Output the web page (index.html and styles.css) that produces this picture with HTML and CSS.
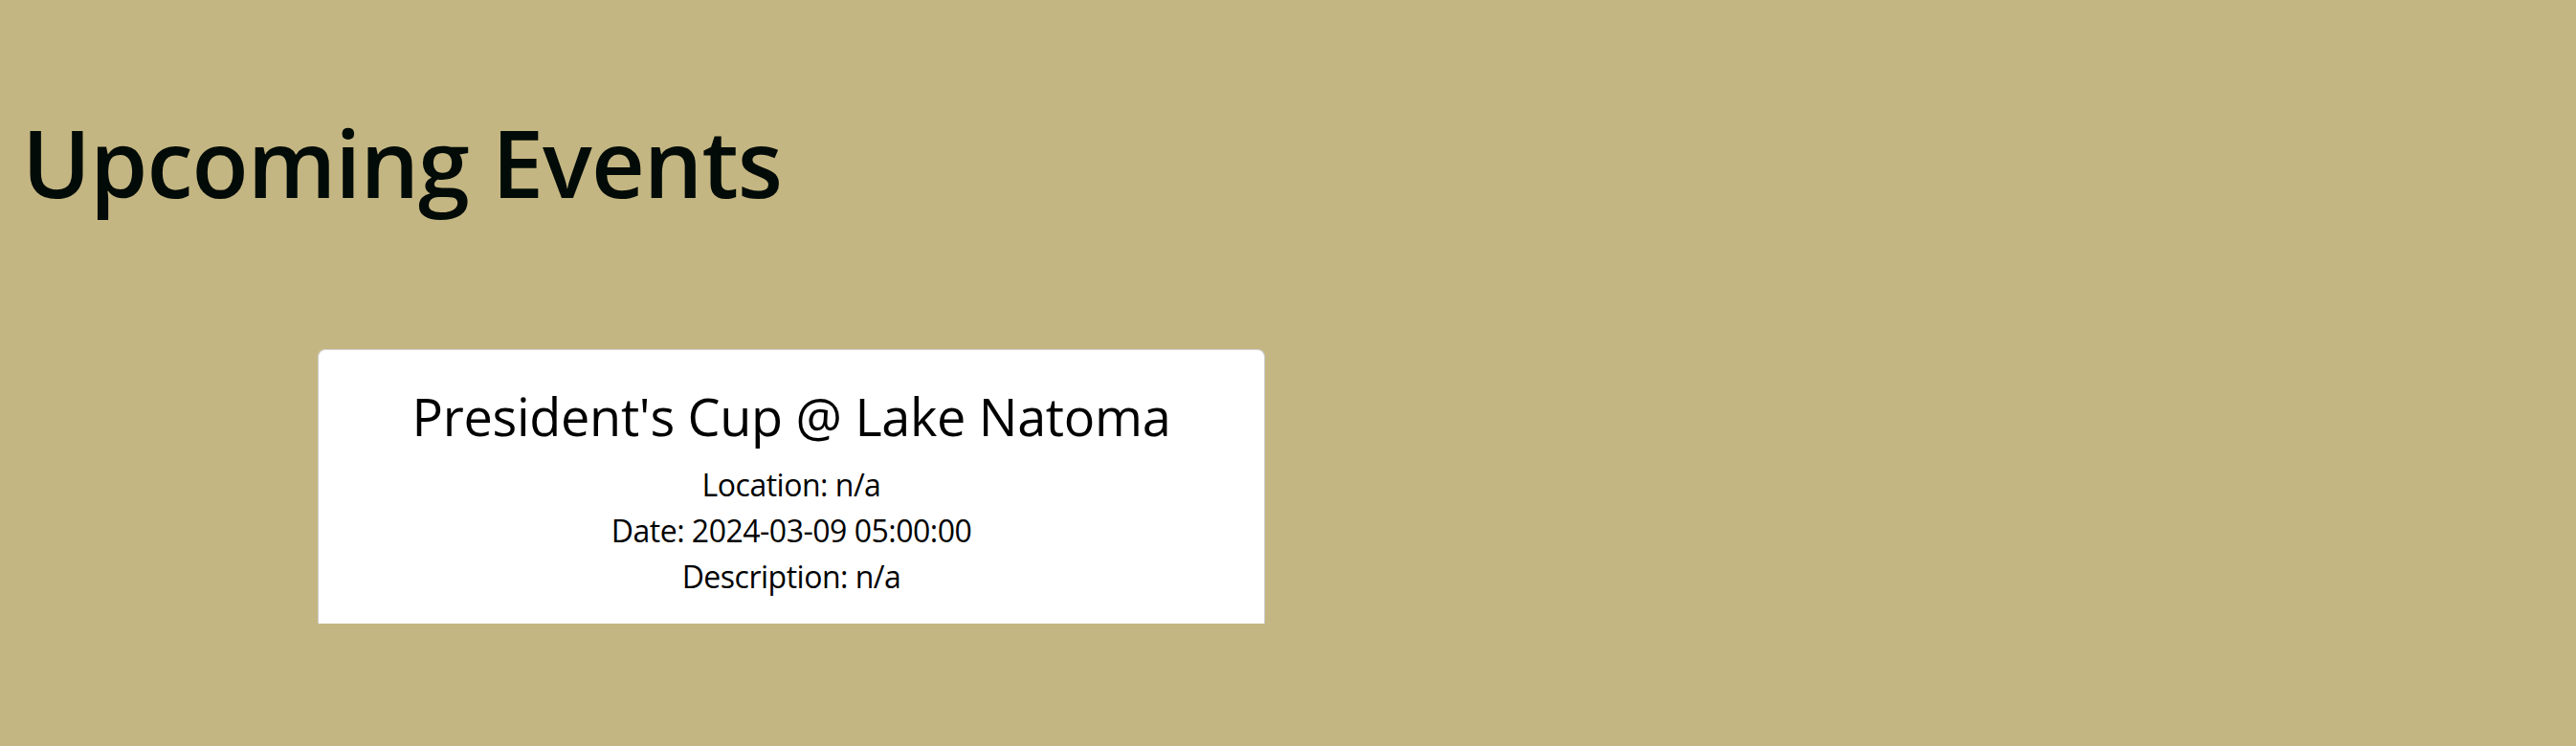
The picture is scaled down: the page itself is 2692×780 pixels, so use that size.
FILE: index.html
```html
<!DOCTYPE html>
<html lang="en">
<head>
<meta charset="utf-8">
<title>Upcoming Events</title>
<link rel="stylesheet" href="styles.css">
</head>
<body>
  <main class="page">
    <h1 class="page-title">Upcoming Events</h1>
    <section class="events">
      <article class="event-card">
        <h2 class="event-title">President's Cup @ Lake Natoma</h2>
        <p class="event-line">Location: n/a</p>
        <p class="event-line">Date: 2024-03-09 05:00:00</p>
        <p class="event-line">Description: n/a</p>
      </article>
    </section>
  </main>
</body>
</html>
```

FILE: styles.css
```css
html, body {
  margin: 0;
  padding: 0;
  background: #c4b682;
}

body {
  font-family: "Open Sans", "Noto Sans", "Liberation Sans", sans-serif;
  color: #000;
  height: 780px;
  overflow: hidden;
}

.page {
  display: flex;
  flex-direction: column;
}

.page-title {
  margin: 111px 0 0 0;
  padding-left: 23px;
  font-size: 97px;
  line-height: 116px;
  font-weight: 600;
  letter-spacing: -1px;
  color: #020b07;
}

.events {
  display: flex;
  padding-left: 332px;
  margin-top: 138px;
}

.event-card {
  box-sizing: border-box;
  width: 990px;
  height: 287px;
  background: #fff;
  border: 1px solid #cfcfcf;
  border-bottom: none;
  border-radius: 8px 8px 0 0;
  padding: 37px 20px 0;
  text-align: center;
  overflow: hidden;
}

.event-title {
  margin: 0 0 15px;
  font-size: 54px;
  line-height: 65px;
  font-weight: 400;
  letter-spacing: -0.3px;
}

.event-line {
  margin: 0;
  font-size: 32px;
  line-height: 48px;
  letter-spacing: -0.5px;
}
```
